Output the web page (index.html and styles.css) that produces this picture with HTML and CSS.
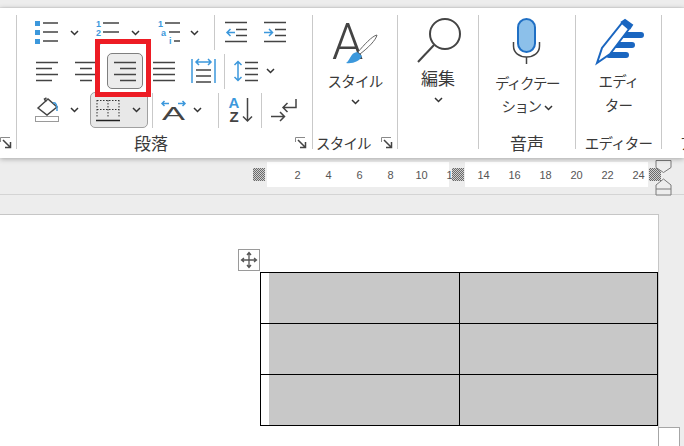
FILE: index.html
```html
<!DOCTYPE html>
<html lang="ja">
<head>
    <meta charset="UTF-8">
    <title>段落 - 右揃え</title>
    <link rel="stylesheet" href="styles.css">
</head>
<body>
    <div class="top-strip"></div>

    <div class="ribbon">
        <div class="group group-stub">
            <div class="group-body"></div>
            <div class="group-label label-stub">
                <svg class="launcher" width="11" height="11" viewBox="0 0 11 11"><path class="line-grey" d="M.5 5V.5H10"/><path class="line" d="M3 3l7 7M10.500 5v5.500H5"/></svg>
            </div>
        </div>

        <div class="group group-para">
            <div class="para-rows">
                <div class="para-row row-one">
                    <svg width="24" height="23" viewBox="0 0 24 23"><rect class="fill-blue" y="0" width="5" height="5"/><rect class="fill-blue" y="9" width="5" height="5"/><rect class="fill-blue" y="18" width="5" height="5"/><path class="line" d="M8 2h15M8 11h15M8 20h15"/></svg>
                    <svg class="chevron" width="9" height="6" viewBox="0 0 9 6"><path d="M1 1l3.500 3.500L8 1"/></svg>
                    <svg width="24" height="23" viewBox="0 0 24 23"><text class="icon-num" x="0" y="6">1</text><text class="icon-num" x="0" y="15">2</text><text class="icon-num" x="0" y="24">3</text><path class="line" d="M7 2h16M7 11h16"/></svg>
                    <svg class="chevron" width="9" height="6" viewBox="0 0 9 6"><path d="M1 1l3.500 3.500L8 1"/></svg>
                    <svg width="24" height="23" viewBox="0 0 24 23"><text class="icon-num" x="1" y="6">1</text><text class="icon-num" x="4" y="15">a</text><text class="icon-num" x="12" y="23">i</text><path class="line" d="M8 2h15M12 11h11M17 20h6"/></svg>
                    <svg class="chevron" width="9" height="6" viewBox="0 0 9 6"><path d="M1 1l3.500 3.500L8 1"/></svg>
                    <div class="vsep"></div>
                    <svg width="23" height="23" viewBox="0 0 23 23"><path class="line" d="M0 1.500h22M11 8.500h11M11 14.500h11M0 20.500h22"/><path class="line-blue" d="M10 11.500H2M5.500 8L2 11.500 5.500 15"/></svg>
                    <svg width="23" height="23" viewBox="0 0 23 23"><path class="line" d="M0 1.500h22M11 8.500h11M11 14.500h11M0 20.500h22"/><path class="line-blue" d="M0 11.500h8M5 8l3.500 3.500L5 15"/></svg>
                </div>

                <div class="para-row row-two">
                    <svg width="23" height="20" viewBox="0 0 23 20"><path class="line" d="M0 1.500h22M0 7.500h16M0 13.500h22M0 19.500h16"/></svg>
                    <svg width="23" height="20" viewBox="0 0 23 20"><path class="line" d="M0 1.500h22M5 7.500h12M0 13.500h22M5 19.500h12"/></svg>
                    <div class="align-active">
                        <svg width="24" height="20" viewBox="0 0 24 20"><path class="line" d="M1 1.500h22M7 7.500h16M1 13.500h22M7 19.500h16"/></svg>
                        <div class="red-frame"></div>
                    </div>
                    <svg width="23" height="20" viewBox="0 0 23 20"><path class="line" d="M0 1.500h22M0 7.500h22M0 13.500h22M0 19.500h22"/></svg>
                    <svg width="25" height="26" viewBox="0 0 25 26"><path class="line-blue" d="M1 1v24M24 1v24M5 4h15M8 1L5 4l3 3M17 1l3 3-3 3"/><path class="line" d="M5 12h15M5 18h15M5 24h15"/></svg>
                    <div class="vsep"></div>
                    <svg width="26" height="22" viewBox="0 0 26 22"><path class="line-blue" d="M5 2v18M1.500 5L5 1.500 8.500 5M1.500 17L5 20.500 8.500 17"/><path class="line" d="M12 2.500h13M12 8.500h13M12 14.500h13M12 20.500h13"/></svg>
                    <svg class="chevron" width="9" height="6" viewBox="0 0 9 6"><path d="M1 1l3.500 3.500L8 1"/></svg>
                </div>

                <div class="para-row row-three">
                    <svg width="24" height="24" viewBox="0 0 24 24"><path class="line" d="M3 10L13 1l9 8-10 8zM11 4L9.500 1 11.500 0"/><path class="line-blue" d="M18 5c3-1 4.500 3 4 8"/><rect class="swatch" x=".5" y="18.500" width="23" height="5"/></svg>
                    <svg class="chevron" width="9" height="6" viewBox="0 0 9 6"><path d="M1 1l3.500 3.500L8 1"/></svg>
                    <div class="border-btn">
                        <svg width="24" height="23" viewBox="0 0 24 23"><path class="line-dotted" d="M1 1.500h22M1 1v18M23 1v18M12 1v18M1 10.500h22"/><path class="line-heavy" d="M0 21.500h24"/></svg>
                        <svg class="chevron" width="9" height="6" viewBox="0 0 9 6"><path d="M1 1l3.500 3.500L8 1"/></svg>
                    </div>
                    <div class="vsep"></div>
                    <svg width="25" height="20" viewBox="0 0 25 20"><path class="line-blue" d="M1 3.500h7M3.500 1L1 3.500 3.500 6M17 3.500h7M21.500 1L24 3.500 21.500 6"/><text class="icon-big-a" x="12.500" y="19.500" textLength="23" lengthAdjust="spacingAndGlyphs">A</text></svg>
                    <svg class="chevron" width="9" height="6" viewBox="0 0 9 6"><path d="M1 1l3.500 3.500L8 1"/></svg>
                    <div class="vsep"></div>
                    <svg width="25" height="26" viewBox="0 0 25 26"><text class="icon-sort-a" x="6" y="11">A</text><text class="icon-sort-z" x="6" y="25">Z</text><path class="line" d="M19.500 1v23M15 19.500l4.500 4.500 4.500-4.500"/></svg>
                    <div class="vsep"></div>
                    <svg width="27" height="23" viewBox="0 0 27 23"><path class="line" d="M26 0v8.500H13M17.500 4L13 8.500l4.500 4.500M1 17.500h13.500M10 13l4.500 4.500L10 22"/></svg>
                </div>
            </div>
            <div class="group-label label-para">
                <span class="kanji">段落</span>
                <svg class="launcher" width="11" height="11" viewBox="0 0 11 11"><path class="line-grey" d="M.5 5V.5H10"/><path class="line" d="M3 3l7 7M10.500 5v5.500H5"/></svg>
            </div>
        </div>

        <div class="group group-style">
            <div class="large-btn">
                <svg class="large-icon" width="48" height="44" viewBox="0 0 48 44"><text class="icon-style-a" x="1" y="38">A</text><path class="brush-handle" d="M46 14c-1 5-9 13-17 19l-2-2c6-7 14-16 19-17z"/><path class="fill-blue" d="M26 31l5 4c-2 5-9 8-16 7 4-2 4-10 11-11z"/></svg>
                <div class="large-text text-style">スタイル</div>
                <svg class="chevron chevron-large" width="9" height="6" viewBox="0 0 9 6"><path d="M1 1l3.500 3.500L8 1"/></svg>
            </div>
            <div class="group-label label-style">
                <span>スタイル</span>
                <svg class="launcher" width="11" height="11" viewBox="0 0 11 11"><path class="line-grey" d="M.5 5V.5H10"/><path class="line" d="M3 3l7 7M10.500 5v5.500H5"/></svg>
            </div>
        </div>

        <div class="group group-edit">
            <div class="large-btn">
                <svg class="large-icon" width="46" height="46" viewBox="0 0 46 46"><circle class="line-bold" cx="30" cy="16" r="15"/><path class="line-bold" d="M19 27L3 44"/></svg>
                <div class="large-text text-edit kanji">編集</div>
                <svg class="chevron chevron-edit" width="9" height="6" viewBox="0 0 9 6"><path d="M1 1l3.500 3.500L8 1"/></svg>
            </div>
            <div class="group-label"></div>
        </div>

        <div class="group group-voice">
            <div class="large-btn">
                <svg class="large-icon" width="30" height="46" viewBox="0 0 30 46"><rect class="mic-body" x="6" y="1" width="17" height="33" rx="8.500"/><path class="line" d="M1.500 24v4c0 7 6 11 13 11s13-4 13-11v-4M14.500 39v7"/></svg>
                <div class="large-text text-voice">ディクテー<br>ション<svg class="chevron chevron-inline" width="9" height="6" viewBox="0 0 9 6"><path d="M1 1l3.500 3.500L8 1"/></svg></div>
            </div>
            <div class="group-label label-center kanji">音声</div>
        </div>

        <div class="group group-editor">
            <div class="large-btn">
                <svg class="large-icon" width="48" height="46" viewBox="0 0 48 46"><path class="pen-bar" d="M29 16h17M21 26h16M14 36h17"/><path class="pen-body" d="M2 44l5-15L27 4l7 6-19 25z"/><path class="pen-cap" d="M27 3l3-2 7 5-2 3z"/></svg>
                <div class="large-text text-editor">エディ<br>ター</div>
            </div>
            <div class="group-label label-center">エディター</div>
        </div>

        <div class="group group-next">
            <div class="group-body"></div>
            <div class="group-label label-next">アドイン</div>
        </div>
    </div>

    <div class="ruler">
        <div class="ruler-block"></div>
        <div class="ruler-track track-left">
            <span>2</span><span>4</span><span>6</span><span>8</span><span>10</span><span>12</span>
        </div>
        <div class="ruler-block"></div>
        <div class="ruler-track track-right">
            <span>14</span><span>16</span><span>18</span><span>20</span><span>22</span><span>24</span>
        </div>
        <div class="ruler-block"></div>
        <svg class="indent-marker" width="17" height="36" viewBox="0 0 17 36"><path class="marker" d="M1 .5h15v7l-7.500 5-7.500-5zM8.500 19l7.500 6v10H1V25zM1 29h15"/></svg>
    </div>

    <div class="page">
        <div class="table-wrap">
            <div class="table-handle">
                <svg width="18" height="18" viewBox="0 0 18 18"><path class="move-arrows" d="M9 2v14M2 9h14M7 4l2-2.500L11 4M7 14l2 2.500 2-2.500M4 7L1.500 9 4 11M14 7l2.500 2-2.500 2"/></svg>
            </div>
            <div class="doc-table">
                <div class="cell cell-first"></div><div class="cell"></div>
                <div class="cell cell-first"></div><div class="cell"></div>
                <div class="cell cell-first"></div><div class="cell"></div>
            </div>
        </div>
    </div>
    <div class="next-page"></div>
</body>
</html>
```

FILE: styles.css
```css
:root {
    --app-bg: #ededed;
    --sep-color: #c9c9c9;
    --icon-color: #444444;
    --icon-blue: #3c98dc;
    --text-color: #3a3a3a;
    --cell-shade: #c8c8c8;
}

* {
    margin: 0;
    padding: 0;
    box-sizing: border-box;
}

body {
    position: relative;
    width: 684px;
    height: 446px;
    overflow: hidden;
    background: var(--app-bg);
    font-family: "Noto Sans CJK JP", "Liberation Sans", sans-serif;
    color: var(--text-color);
}

svg {
    display: block;
    fill: none;
    overflow: visible;
}

.top-strip {
    height: 8px;
    border-bottom: 1px solid #e2e2e2;
}

/* ribbon */

.ribbon {
    position: relative;
    z-index: 1;
    display: flex;
    height: 150px;
    padding-top: 7px;
    background: #ffffff;
    box-shadow: 0 1px 5px rgba(0, 0, 0, 0.3);
    overflow: hidden;
}

.group {
    display: flex;
    flex-direction: column;
    justify-content: space-between;
    flex: none;
    height: 134px;
    border-right: 1px solid var(--sep-color);
}

.group-stub { width: 17px; }
.group-para { width: 296px; }
.group-style { width: 85px; }
.group-edit { width: 81px; }
.group-voice { width: 97px; }
.group-editor { width: 86px; }
.group-next { width: 22px; border-right: none; }

.group-label {
    display: flex;
    align-items: center;
    justify-content: space-between;
    flex: none;
    height: 21px;
    margin-bottom: -4px;
    font-size: 14.5px;
    letter-spacing: -0.8px;
    line-height: 21px;
    white-space: nowrap;
}

.kanji {
    font-size: 17px;
    letter-spacing: 0;
}

.label-stub { padding-right: 5px; }
.label-para { padding: 0 6px 0 117px; }
.label-style { padding: 0 5px 0 3px; }
.label-center { justify-content: center; }
.label-next { padding-left: 18px; overflow: hidden; justify-content: flex-start; }

/* paragraph icons */

.para-row {
    display: grid;
    align-items: center;
    justify-items: start;
}

.row-one {
    grid-template-columns: 36px 25px 36px 25px 34px 23px 11px 39px auto;
    height: 31px;
    margin-bottom: 6px;
    padding-left: 18px;
}

.row-one > .chevron,
.row-three > .chevron {
    margin-left: -1px;
}

.row-two {
    grid-template-columns: 39px 32px 46px 38px 33px 9px 33px auto;
    height: 38px;
    margin-bottom: 2px;
    padding-left: 19px;
}

.row-three {
    grid-template-columns: 36px 19px 62px 9px 33px 24px 10px 33px 9px auto;
    height: 36px;
    padding-left: 18px;
}

.vsep {
    width: 1px;
    height: 35px;
    background: var(--sep-color);
}

.chevron path {
    stroke: #333333;
    stroke-width: 1.5;
}

.line { stroke: var(--icon-color); stroke-width: 1.5; }
.line-bold { stroke: var(--icon-color); stroke-width: 2; }
.line-grey { stroke: #8a8a8a; stroke-width: 1; }
.line-blue { stroke: var(--icon-blue); stroke-width: 1.5; }
.line-dotted { stroke: #333333; stroke-width: 1; stroke-dasharray: 1.500 1.500; }
.line-heavy { stroke: #222222; stroke-width: 1.5; }
.fill-blue { fill: var(--icon-blue); }
.swatch { fill: #ffffff; stroke: #9a9a9a; }

.icon-num {
    fill: var(--icon-blue);
    font-family: "Liberation Sans", sans-serif;
    font-size: 9px;
    font-weight: 700;
}

.icon-big-a {
    fill: var(--icon-color);
    font-family: "Liberation Sans", sans-serif;
    font-size: 18px;
    text-anchor: middle;
}

.icon-sort-a,
.icon-sort-z {
    font-family: "Liberation Sans", sans-serif;
    font-size: 15px;
    font-weight: 700;
    text-anchor: middle;
}

.icon-sort-a { fill: var(--icon-blue); }
.icon-sort-z { fill: var(--icon-color); }

.align-active {
    position: relative;
    display: flex;
    align-items: center;
    justify-content: center;
    width: 36px;
    height: 36px;
    border: 1px solid #7f7f7f;
    border-radius: 5px;
    background: #ececec;
}

.red-frame {
    position: absolute;
    top: -15px;
    left: -13px;
    right: -9px;
    bottom: -9px;
    border: 5px solid #ed1c24;
}

.border-btn {
    display: flex;
    align-items: center;
    gap: 12px;
    width: 58px;
    height: 36px;
    padding-left: 5px;
    border: 1px solid #a0a0a0;
    border-radius: 5px;
    background: #e8e8e8;
}

/* large buttons */

.large-btn {
    display: flex;
    flex-direction: column;
    align-items: center;
}

.large-text {
    font-size: 14.5px;
    letter-spacing: -0.8px;
    line-height: 24px;
    text-align: center;
}

.group-style .large-icon { margin-top: 6px; }
.group-edit .large-icon { margin-top: 3px; }
.group-voice .large-icon { margin-top: 3px; }
.group-editor .large-icon { margin-top: 4px; }

.text-style { margin-top: 4px; }
.text-edit { margin-top: 2px; font-size: 17px; letter-spacing: 0; }
.text-voice { margin-top: 7px; line-height: 23px; letter-spacing: -1.500px; }
.text-editor { margin-top: 4px; }

.chevron-large { margin-top: 6px; }
.chevron-edit { margin-top: 7px; }

.chevron-inline {
    display: inline-block;
    margin-left: 3px;
    vertical-align: middle;
}

.icon-style-a {
    fill: var(--icon-color);
    font-family: Roboto, "Liberation Sans", sans-serif;
    font-size: 50px;
    font-weight: 300;
}

.brush-handle { fill: #ffffff; stroke: #666666; }
.launcher { flex: none; }
.mic-body { fill: #8cc0ea; stroke: #1f6fc4; stroke-width: 2; }
.pen-bar { stroke: #1a66c0; stroke-width: 6; stroke-linecap: round; }
.pen-body { fill: #ffffff; stroke: #1a66c0; stroke-width: 2; }
.pen-cap { fill: #1a66c0; stroke: #1a66c0; stroke-width: 2; }

/* ruler */

.ruler {
    display: flex;
    align-items: center;
    height: 37px;
    padding: 4px 0 7px 253px;
    border-bottom: 1px solid #d4d4d4;
}

.ruler-block {
    position: relative;
    flex: none;
    width: 12px;
    height: 13px;
    background: repeating-conic-gradient(#6a6a6a 0 25%, #d0d0d0 0 50%) 0 0 / 2px 2px;
}

.ruler-track {
    display: flex;
    flex: none;
    align-self: stretch;
    background: #ffffff;
    font-family: "Liberation Sans", sans-serif;
    font-size: 11px;
    line-height: 26px;
    color: #555555;
}

.ruler-track span {
    flex: none;
    width: 31px;
    text-align: center;
}

.track-left { width: 182px; margin: 0 3px 0 2px; padding-left: 15px; }
.track-right { width: 183px; margin: 0 1px; padding-left: 3px; }

.indent-marker {
    position: relative;
    top: 3px;
    flex: none;
    margin: -5px 0 -5px -6px;
}

.marker { fill: #ededed; stroke: #7a7a7a; stroke-width: 1; }

/* document page */

.page {
    width: 659px;
    height: 232px;
    margin-top: 19px;
    padding: 34px 0 0 238px;
    border-top: 1px solid #c6c6c6;
    border-right: 1px solid #c6c6c6;
    background: #ffffff;
}

.table-wrap {
    position: relative;
    padding: 23px 0 0 22px;
}

.table-handle {
    position: absolute;
    top: 0;
    left: 0;
    display: flex;
    align-items: center;
    justify-content: center;
    width: 22px;
    height: 22px;
    border: 1px solid #9a9a9a;
    background: #ffffff;
}

.move-arrows { stroke: #555555; stroke-width: 1.3; }

.doc-table {
    display: grid;
    grid-template-columns: 199px 198px;
    grid-auto-rows: 51px;
    width: 398px;
    border-top: 1px solid #000000;
    border-left: 1px solid #000000;
}

.cell {
    border-right: 1px solid #000000;
    border-bottom: 1px solid #000000;
    background: var(--cell-shade);
}

.cell-first {
    background: linear-gradient(to right, #ffffff 8px, var(--cell-shade) 8px);
}

.next-page {
    position: absolute;
    top: 427px;
    left: 658px;
    width: 22px;
    height: 30px;
    border: 1px solid #a6a6a6;
    background: #ffffff;
}
```
